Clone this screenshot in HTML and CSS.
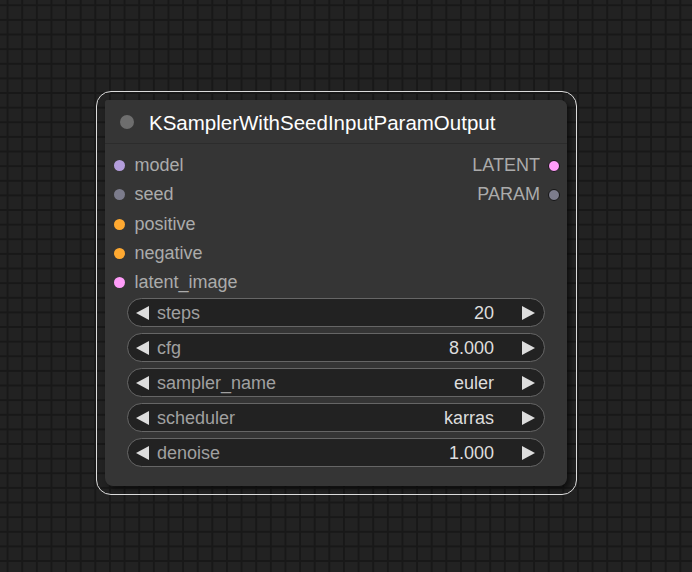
FILE: index.html
```html
<!DOCTYPE html>
<html>
<head>
<meta charset="utf-8">
<link rel="stylesheet" href="styles.css">
</head>
<body>
<div class="canvas">
  <div class="node">
    <div class="title">
      <span class="title-dot"></span>
      <span class="title-text">KSamplerWithSeedInputParamOutput</span>
    </div>
    <div class="slots">
      <div class="inputs">
        <div class="slot in"><span class="dot c-model"></span><span>model</span></div>
        <div class="slot in"><span class="dot c-seed"></span><span>seed</span></div>
        <div class="slot in"><span class="dot c-cond"></span><span>positive</span></div>
        <div class="slot in"><span class="dot c-cond"></span><span>negative</span></div>
        <div class="slot in"><span class="dot c-latent"></span><span>latent_image</span></div>
      </div>
      <div class="outputs">
        <div class="slot out"><span>LATENT</span><span class="dot ring c-latent"></span></div>
        <div class="slot out"><span>PARAM</span><span class="dot ring c-seed"></span></div>
      </div>
    </div>
    <div class="widgets">
      <div class="widget"><span class="arrow left"></span><span class="label">steps</span><span class="value">20</span><span class="arrow right"></span></div>
      <div class="widget"><span class="arrow left"></span><span class="label">cfg</span><span class="value">8.000</span><span class="arrow right"></span></div>
      <div class="widget"><span class="arrow left"></span><span class="label">sampler_name</span><span class="value">euler</span><span class="arrow right"></span></div>
      <div class="widget"><span class="arrow left"></span><span class="label">scheduler</span><span class="value">karras</span><span class="arrow right"></span></div>
      <div class="widget"><span class="arrow left"></span><span class="label">denoise</span><span class="value">1.000</span><span class="arrow right"></span></div>
    </div>
  </div>
</div>
</body>
</html>
```

FILE: styles.css
```css
html, body {
  margin: 0;
  padding: 0;
  width: 692px;
  height: 572px;
  overflow: hidden;
  background: #222222;
  font-family: "Liberation Sans", Arial, sans-serif;
}

.canvas {
  position: relative;
  width: 692px;
  height: 572px;
  background-color: #222222;
  background-image:
    linear-gradient(to right, #181818 1.6px, transparent 1.6px),
    linear-gradient(to bottom, #181818 1.6px, transparent 1.6px);
  background-size: 14.63px 14.63px;
  background-position: 6.6px 4.3px;
}

.node {
  position: absolute;
  left: 105px;
  top: 100px;
  width: 462px;
  height: 386px;
  background: #353535;
  border-radius: 3px 7px 8px 8px;
  box-shadow: 3px 3px 5px rgba(0, 0, 0, 0.55);
  display: flex;
  flex-direction: column;
}

.node::before {
  content: "";
  position: absolute;
  left: -9px;
  top: -9px;
  right: -10px;
  bottom: -9px;
  border: 1.6px solid #dcdcdc;
  border-radius: 15px;
  pointer-events: none;
}

.title {
  height: 44px;
  flex: none;
  display: flex;
  align-items: center;
  box-sizing: border-box;
  border-bottom: 1px solid #2c2c2c;
  background: #353535;
  border-radius: 3px 7px 0 0;
  padding-left: 15px;
}

.title-dot {
  width: 14px;
  height: 14px;
  border-radius: 50%;
  background: #6e6e6e;
  flex: none;
}

.title-text {
  margin-left: 15px;
  margin-top: 3px;
  color: #ffffff;
  font-size: 20.5px;
}

.slots {
  display: flex;
  justify-content: space-between;
  padding-top: 7px;
}

.inputs, .outputs {
  display: flex;
  flex-direction: column;
}

.slot {
  height: 29.3px;
  display: flex;
  align-items: center;
  font-size: 18px;
  color: #ababab;
}

.slot.in {
  padding-left: 9px;
}

.slot.in .dot {
  margin-right: 9.5px;
}

.slot.out {
  justify-content: flex-end;
  padding-right: 7px;
}

.slot.out .dot {
  margin-left: 8px;
}

.dot {
  width: 11px;
  height: 11px;
  border-radius: 50%;
  flex: none;
  box-sizing: border-box;
}

.dot.ring {
  width: 12px;
  height: 12px;
  border: 1.5px solid #151515;
}

.c-model { background: #b39ddb; }
.c-seed { background: #7c7c8c; }
.c-cond { background: #ffa931; }
.c-latent { background: #ff9cf9; }

.widgets {
  display: flex;
  flex-direction: column;
  gap: 6px;
  padding: 1px 22px 0 22px;
}

.widget {
  height: 29px;
  box-sizing: border-box;
  border: 1.2px solid #666666;
  border-radius: 15px;
  background: #222222;
  display: flex;
  align-items: center;
  font-size: 18px;
  padding: 0 9px 0 8px;
}

.arrow {
  width: 0;
  height: 0;
  border-top: 7px solid transparent;
  border-bottom: 7px solid transparent;
  flex: none;
}

.arrow.left {
  border-right: 13px solid #dddddd;
}

.arrow.right {
  border-left: 13px solid #dddddd;
}

.label {
  color: #a0a0a0;
  margin-left: 8px;
  flex: 1;
  position: relative;
  top: 0.5px;
}

.value {
  color: #dddddd;
  margin-right: 28px;
  position: relative;
  top: 0.5px;
}
```
